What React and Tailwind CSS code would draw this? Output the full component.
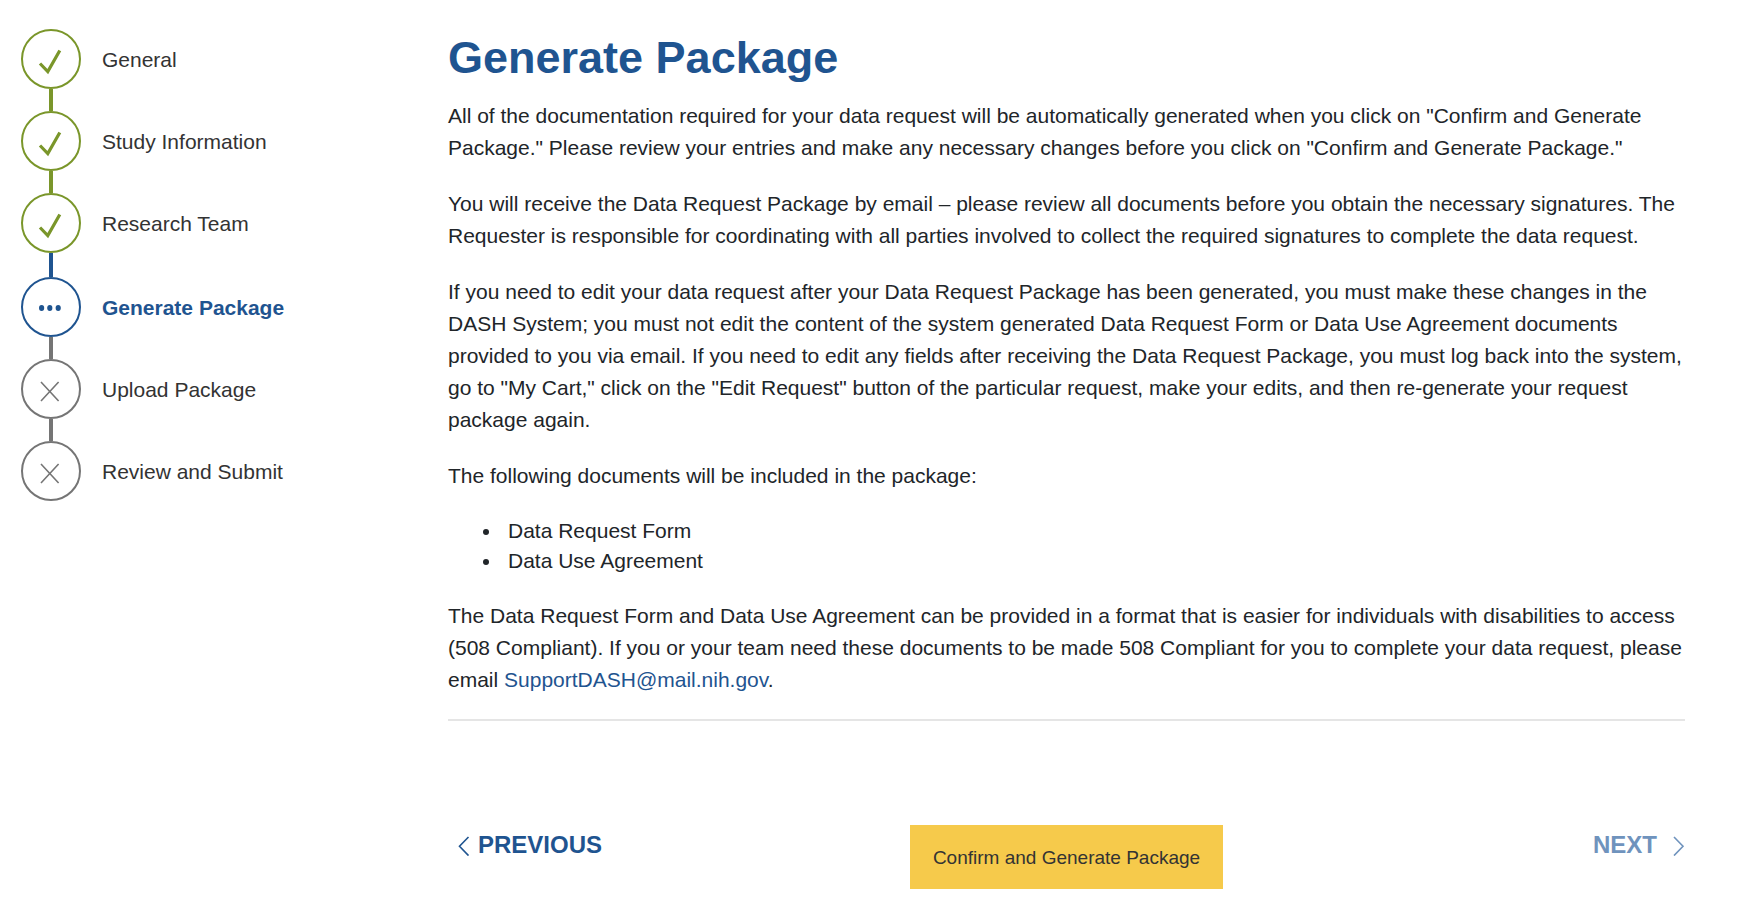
const steps = [
  { label: "General", state: "done" },
  { label: "Study Information", state: "done" },
  { label: "Research Team", state: "done" },
  { label: "Generate Package", state: "current" },
  { label: "Upload Package", state: "todo" },
  { label: "Review and Submit", state: "todo" },
];

const circleStyles = {
  done: "border-[#7a962a] text-[#7a962a]",
  current: "border-[#1f5490] text-[#1f5490]",
  todo: "border-[#757575] text-[#757575]",
};

const connectorStyles = {
  done: "h-[22px] bg-[#7a962a]",
  current: "h-6 bg-[#1f5490]",
  todo: "h-[22px] bg-[#757575]",
};

function StepIcon({ state }) {
  return (
    <svg viewBox="0 0 56 56" className="size-14" fill="none" stroke="currentColor" aria-hidden="true">
      {state === "done" && (
        <path d="M17 32.5 L24.8 40.5 L36.8 19.5" strokeWidth="3.2" />
      )}
      {state === "current" && (
        <g fill="currentColor" stroke="none">
          <ellipse cx="18.6" cy="29" rx="2.6" ry="3" />
          <ellipse cx="26.8" cy="29" rx="2.6" ry="3" />
          <ellipse cx="35.2" cy="29" rx="2.6" ry="3" />
        </g>
      )}
      {state === "todo" && (
        <path d="M18 21 L35.6 40 M35.6 21 L18 40" strokeWidth="1.6" />
      )}
    </svg>
  );
}

function Chevron({ direction }) {
  return (
    <svg viewBox="0 0 12 22" className="h-[22px] w-3" fill="none" stroke="currentColor" strokeWidth="1.6" aria-hidden="true">
      <path d={direction === "left" ? "M10.5 3 L1.5 12.3 L10.5 21.6" : "M1 3 L10 12.3 L1 21.6"} />
    </svg>
  );
}

function Steps() {
  return (
    <nav aria-label="Progress" className="w-[427px] shrink-0 pt-[9px]">
      <ol>
        {steps.map((step, i) => (
          <li key={step.label}>
            {i > 0 && (
              <div className="flex w-[60px] justify-center">
                <div className={`w-1 ${connectorStyles[step.state]}`} />
              </div>
            )}
            <a
              href="#"
              aria-current={step.state === "current" ? "step" : undefined}
              className="flex items-center gap-[21px]"
            >
              <span className={`flex size-[60px] items-center justify-center rounded-full border-2 ${circleStyles[step.state]}`}>
                <StepIcon state={step.state} />
              </span>
              <span className={step.state === "current" ? "pt-[2px] font-bold text-[#1f5490]" : "pt-[2px] text-[#333]"}>
                {step.label}
              </span>
            </a>
          </li>
        ))}
      </ol>
    </nav>
  );
}

export default function App() {
  return (
    <div className="flex min-h-screen bg-white py-5 pr-[62px] pl-[21px] font-['Liberation_Sans',Arial,sans-serif] text-[21px] text-[#212529]">
      <Steps />
      <main className="min-w-0 flex-1">
        <h1 className="text-[45px] leading-[76px] font-bold text-[#1f5490]">Generate Package</h1>
        <div className="mt-1 flex flex-col gap-6 leading-8">
          <p>
            All of the documentation required for your data request will be automatically generated when you click on
            "Confirm and Generate Package." Please review your entries and make any necessary changes before you click
            on "Confirm and Generate Package."
          </p>
          <p>
            You will receive the Data Request Package by email – please review all documents before you obtain the
            necessary signatures. The Requester is responsible for coordinating with all parties involved to collect the
            required signatures to complete the data request.
          </p>
          <p>
            If you need to edit your data request after your Data Request Package has been generated, you must make
            these changes in the DASH System; you must not edit the content of the system generated Data Request Form or
            Data Use Agreement documents provided to you via email. If you need to edit any fields after receiving the
            Data Request Package, you must log back into the system, go to "My Cart," click on the "Edit Request" button
            of the particular request, make your edits, and then re-generate your request package again.
          </p>
          <p>The following documents will be included in the package:</p>
          <ul className="list-disc pl-[54px] leading-[30px]">
            <li className="pl-[6px]">Data Request Form</li>
            <li className="pl-[6px]">Data Use Agreement</li>
          </ul>
          <p>
            The Data Request Form and Data Use Agreement can be provided in a format that is easier for individuals with
            disabilities to access (508 Compliant). If you or your team need these documents to be made 508 Compliant
            for you to complete your data request, please email{" "}
            <a href="mailto:SupportDASH@mail.nih.gov" className="text-[#1f5490]">SupportDASH@mail.nih.gov</a>.
          </p>
        </div>
        <hr className="mt-[23px] border-t-2 border-[#e5e5e5]" />
        <div className="mt-[104px] grid grid-cols-[1fr_auto_1fr] items-start">
          <button type="button" className="flex items-center gap-2 justify-self-start pt-[2px] pl-[10px] text-2xl leading-9 font-bold text-[#1f5490]">
            <Chevron direction="left" />
            PREVIOUS
          </button>
          <button type="button" className="h-16 bg-[#f6ca4b] px-[23px] pt-[2px] text-[19px] text-[#333]">
            Confirm and Generate Package
          </button>
          <button type="button" disabled className="flex items-center gap-4 justify-self-end pt-[2px] text-2xl leading-9 font-bold text-[#6f93bd]">
            NEXT
            <Chevron direction="right" />
          </button>
        </div>
      </main>
    </div>
  );
}
